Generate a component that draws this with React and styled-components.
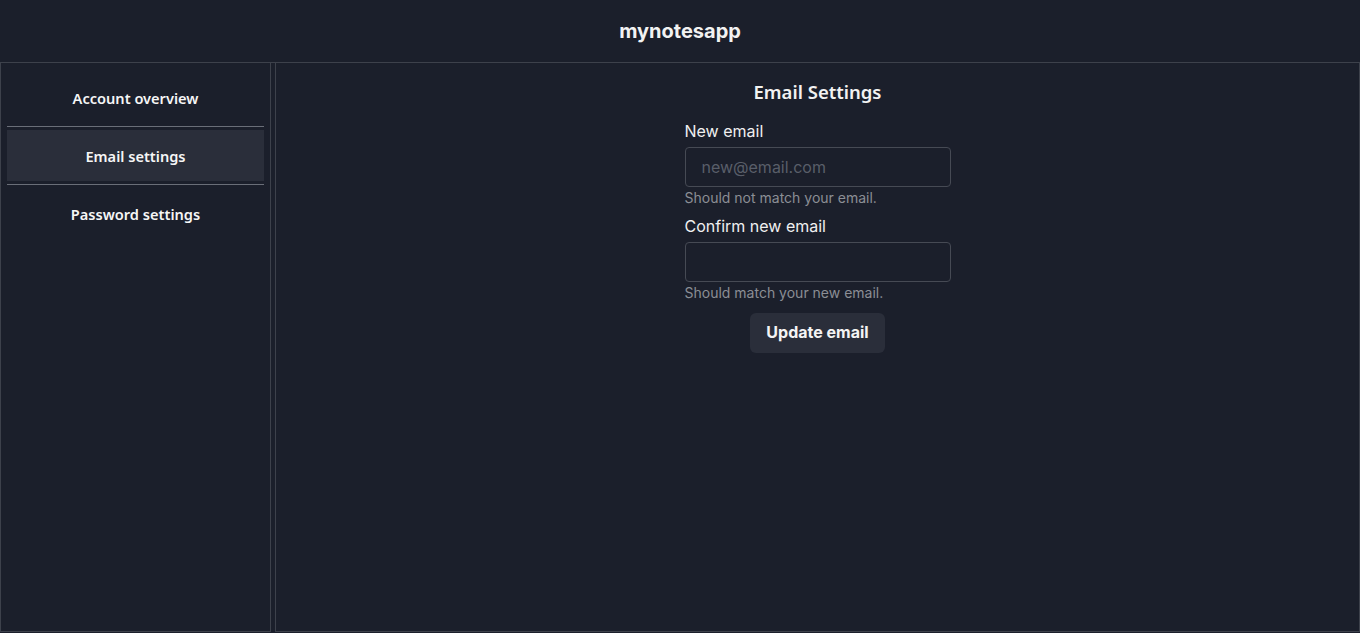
import React from 'react'
import styled, { createGlobalStyle } from 'styled-components'

const GlobalStyle = createGlobalStyle`
  html, body {
    margin: 0;
    padding: 0;
    background: #1b1f2b;
  }
  * {
    box-sizing: border-box;
  }
`

const Page = styled.div`
  background: #1b1f2b;
  color: #f2f2f2;
  display: flex;
  flex-direction: column;
  height: 633px;
`

const Header = styled.header`
  align-items: center;
  border-bottom: 1px solid #3d414b;
  display: flex;
  flex-shrink: 0;
  font-family: Inter, "Noto Sans", sans-serif;
  font-size: 20px;
  font-weight: 700;
  height: 63px;
  justify-content: center;
`

const Body = styled.div`
  display: flex;
  flex: 1;
  gap: 4px;
  padding-bottom: 1px;
`

const Sidebar = styled.nav`
  border: 1px solid #3d414b;
  border-top: none;
  display: flex;
  flex-direction: column;
  padding: 0 6px;
  width: 271px;
`

const NavItem = styled.div`
  align-items: center;
  background: ${props => (props.active ? '#2a2e3a' : 'transparent')};
  color: #f6f6f6;
  display: flex;
  font-family: "Noto Sans", sans-serif;
  font-size: 14.6px;
  font-weight: 600;
  height: ${props => props.height}px;
  justify-content: center;
  padding-top: ${props => props.shift || 0}px;
`

const Divider = styled.hr`
  border: none;
  border-top: 1px solid #6a6e78;
  margin: ${props => props.top || 0}px 0 ${props => props.gap || 0}px;
`

const Main = styled.main`
  align-items: center;
  border: 1px solid #3d414b;
  border-top: none;
  display: flex;
  flex: 1;
  flex-direction: column;
  padding-top: 15px;
`

const Title = styled.h2`
  font-family: "Noto Sans", sans-serif;
  font-size: 18.5px;
  font-weight: 600;
  line-height: 28px;
  margin: 0 0 14px;
`

const Form = styled.form`
  display: flex;
  flex-direction: column;
  font-family: Inter, "Noto Sans", sans-serif;
  width: 266px;
`

const Label = styled.label`
  color: #f0f0f0;
  font-size: 16px;
  line-height: 22px;
  margin-bottom: 5px;
`

const Input = styled.input`
  background: transparent;
  border: 1px solid #464a54;
  border-radius: 4px;
  color: #f0f0f0;
  font-family: Inter, "Noto Sans", sans-serif;
  font-size: 16px;
  height: 40px;
  outline: none;
  padding: 0 16px;

  &::placeholder {
    color: #595e69;
  }
`

const Hint = styled.span`
  color: #8b8e95;
  font-size: 14px;
  line-height: 20px;
  margin: 1px 0 7px;
`

const Button = styled.button`
  align-self: center;
  background: #2a2e3a;
  border: none;
  border-radius: 6px;
  color: #f4f4f4;
  font-family: Inter, "Noto Sans", sans-serif;
  font-size: 16px;
  font-weight: 700;
  height: 40px;
  margin-top: 3px;
  padding: 0 16px 2px;
`

export default function App() {
  return (
    <>
      <GlobalStyle />
      <Page>
        <Header>mynotesapp</Header>
        <Body>
          <Sidebar>
            <NavItem height={63} shift={6}>Account overview</NavItem>
            <Divider gap={3} />
            <NavItem active height={51}>Email settings</NavItem>
            <Divider top={3} />
            <NavItem height={58}>Password settings</NavItem>
          </Sidebar>
          <Main>
            <Title>Email Settings</Title>
            <Form onSubmit={e => e.preventDefault()}>
              <Label>New email</Label>
              <Input placeholder='new@email.com' />
              <Hint>Should not match your email.</Hint>
              <Label>Confirm new email</Label>
              <Input />
              <Hint>Should match your new email.</Hint>
              <Button type='submit'>Update email</Button>
            </Form>
          </Main>
        </Body>
      </Page>
    </>
  )
}
